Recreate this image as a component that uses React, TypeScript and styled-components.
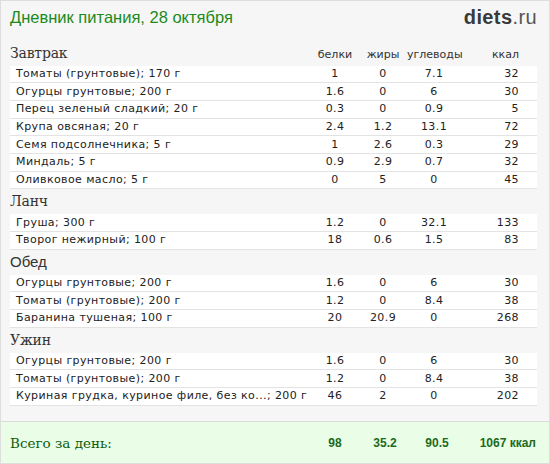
import styled, { createGlobalStyle } from "styled-components";

const GlobalStyle = createGlobalStyle`
  html, body {
    margin: 0;
    padding: 0;
    background: #fff;
  }
`;

const Page = styled.div`
  width: 550px;
  height: 464px;
  box-sizing: border-box;
  border: 1px solid #dedede;
  background: #f6f6f6;
  display: flex;
  flex-direction: column;
  font-family: "DejaVu Sans", Verdana, sans-serif;
  color: #222;
`;

const Header = styled.header`
  height: 39.7px;
  box-sizing: border-box;
  display: flex;
  justify-content: space-between;
  align-items: flex-start;
  padding: 5px 12px 0 9px;
`;

const Title = styled.h1`
  margin: 0;
  font-family: "Liberation Sans", Arial, sans-serif;
  font-weight: normal;
  font-size: 16.5px;
  line-height: 22px;
  color: #1c8a1c;
`;

const Logo = styled.div`
  font-family: "Liberation Sans", Arial, sans-serif;
  font-size: 20px;
  line-height: 22px;
  color: #3a3a3a;
  letter-spacing: 0.4px;
  b {
    font-weight: bold;
  }
  span {
    color: #555;
  }
`;

const Body = styled.main`
  padding: 0 12px 0 9px;
`;

const cols = "1fr 48px 48px 54px 58px";

const SectionHead = styled.div`
  display: grid;
  grid-template-columns: ${cols};
  padding-right: 18px;
  height: 25px;
  box-sizing: border-box;
  align-items: end;
  padding-bottom: 4px;
`;

const SectionTitle = styled.div<{ $sans?: boolean }>`
  font-family: ${(p) =>
    p.$sans ? `"Liberation Sans", Arial, sans-serif` : `"DejaVu Serif", Georgia, serif`};
  font-size: ${(p) => (p.$sans ? "15px" : "14px")};
  letter-spacing: ${(p) => (p.$sans ? "0" : "-0.2px")};
  line-height: 18px;
  color: #333;
`;

const ColLabel = styled.div<{ $right?: boolean }>`
  font-size: 11px;
  line-height: 14px;
  color: #333;
  text-align: ${(p) => (p.$right ? "right" : "center")};
`;

const Row = styled.div`
  display: grid;
  grid-template-columns: ${cols};
  padding: 0 18px 0 6px;
  height: 17.67px;
  box-sizing: border-box;
  background: #fff;
  border-bottom: 1px solid #e3e3e3;
  align-items: center;
  font-size: 11px;
  line-height: 14px;
  letter-spacing: 0.4px;
  white-space: nowrap;
`;

const Cell = styled.div<{ $right?: boolean }>`
  text-align: ${(p) => (p.$right ? "right" : "center")};
`;

const Name = styled.div`
  min-width: 0;
`;

const Total = styled.footer`
  margin-top: auto;
  height: 42px;
  box-sizing: border-box;
  border-top: 1px solid #dadada;
  background: #eafde6;
  display: grid;
  grid-template-columns: 1fr 50px 50px 54px 72px;
  align-items: center;
  padding: 0 13px 0 9px;
  color: #0d5c0d;
`;

const TotalLabel = styled.div`
  font-family: "DejaVu Serif", Georgia, serif;
  font-size: 13.5px;
`;

const TotalNum = styled.div<{ $right?: boolean }>`
  font-family: "Liberation Sans", Arial, sans-serif;
  font-weight: bold;
  font-size: 12px;
  color: #1d6a1d;
  text-align: ${(p) => (p.$right ? "right" : "center")};
`;

type Food = [string, string, string, string, string];

interface IMeal {
  title: string;
  sans?: boolean;
  items: Food[];
}

const meals: IMeal[] = [
  {
    title: "Завтрак",
    items: [
      ["Томаты (грунтовые); 170 г", "1", "0", "7.1", "32"],
      ["Огурцы грунтовые; 200 г", "1.6", "0", "6", "30"],
      ["Перец зеленый сладкий; 20 г", "0.3", "0", "0.9", "5"],
      ["Крупа овсяная; 20 г", "2.4", "1.2", "13.1", "72"],
      ["Семя подсолнечника; 5 г", "1", "2.6", "0.3", "29"],
      ["Миндаль; 5 г", "0.9", "2.9", "0.7", "32"],
      ["Оливковое масло; 5 г", "0", "5", "0", "45"],
    ],
  },
  {
    title: "Ланч",
    items: [
      ["Груша; 300 г", "1.2", "0", "32.1", "133"],
      ["Творог нежирный; 100 г", "18", "0.6", "1.5", "83"],
    ],
  },
  {
    title: "Обед",
    sans: true,
    items: [
      ["Огурцы грунтовые; 200 г", "1.6", "0", "6", "30"],
      ["Томаты (грунтовые); 200 г", "1.2", "0", "8.4", "38"],
      ["Баранина тушеная; 100 г", "20", "20.9", "0", "268"],
    ],
  },
  {
    title: "Ужин",
    items: [
      ["Огурцы грунтовые; 200 г", "1.6", "0", "6", "30"],
      ["Томаты (грунтовые); 200 г", "1.2", "0", "8.4", "38"],
      ["Куриная грудка, куриное филе, без ко...; 200 г", "46", "2", "0", "202"],
    ],
  },
];

function App() {
  return (
    <>
      <GlobalStyle />
      <Page>
        <Header>
          <Title>Дневник питания, 28 октября</Title>
          <Logo>
            <b>diets</b>
            <span>.ru</span>
          </Logo>
        </Header>
        <Body>
          {meals.map((meal, i) => (
            <section key={meal.title}>
              <SectionHead>
                <SectionTitle $sans={meal.sans}>{meal.title}</SectionTitle>
                {i === 0 && (
                  <>
                    <ColLabel>белки</ColLabel>
                    <ColLabel>жиры</ColLabel>
                    <ColLabel>углеводы</ColLabel>
                    <ColLabel $right>ккал</ColLabel>
                  </>
                )}
              </SectionHead>
              {meal.items.map((f, j) => (
                <Row key={j}>
                  <Name>{f[0]}</Name>
                  <Cell>{f[1]}</Cell>
                  <Cell>{f[2]}</Cell>
                  <Cell>{f[3]}</Cell>
                  <Cell $right>{f[4]}</Cell>
                </Row>
              ))}
            </section>
          ))}
        </Body>
        <Total>
          <TotalLabel>Всего за день:</TotalLabel>
          <TotalNum>98</TotalNum>
          <TotalNum>35.2</TotalNum>
          <TotalNum>90.5</TotalNum>
          <TotalNum $right>1067 ккал</TotalNum>
        </Total>
      </Page>
    </>
  );
}

export default App;
